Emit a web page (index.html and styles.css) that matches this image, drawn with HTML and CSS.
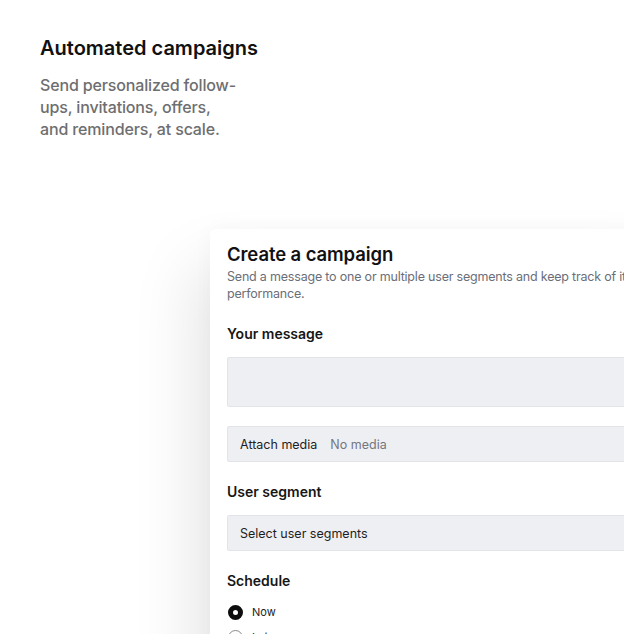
FILE: index.html
```html
<!DOCTYPE html>
<html lang="en">
<head>
<meta charset="utf-8">
<title>Automated campaigns</title>
<link rel="stylesheet" href="styles.css">
</head>
<body>
  <section class="intro">
    <h1 class="intro-title">Automated campaigns</h1>
    <p class="intro-text">Send personalized follow-ups, invitations, offers, and reminders, at scale.</p>
  </section>
  <div class="stage">
    <div class="card">
      <h2 class="card-title">Create a campaign</h2>
      <p class="card-sub">Send a message to one or multiple user segments and keep track of its performance.</p>

      <div class="label first">Your message</div>
      <div class="field textarea"></div>
      <div class="field row gap-top">
        <span class="field-key">Attach media</span>
        <span class="field-val">No media</span>
      </div>

      <div class="label">User segment</div>
      <div class="field row">
        <span class="field-key">Select user segments</span>
      </div>

      <div class="label">Schedule</div>
      <div class="radios">
        <div class="radio-row"><span class="radio on"></span><span class="radio-text">Now</span></div>
        <div class="radio-row"><span class="radio"></span><span class="radio-text">Later</span></div>
      </div>
    </div>
  </div>
</body>
</html>
```
FILE: styles.css
```css
html, body {
  margin: 0;
  padding: 0;
  background: #ffffff;
  overflow: hidden;
  height: 634px;
}
body {
  font-family: Inter, "Noto Sans", "Liberation Sans", sans-serif;
  color: #111111;
}
.intro {
  padding: 36px 0 0 40px;
}
.intro-title {
  margin: 0;
  font-size: 20px;
  line-height: 24px;
  font-weight: 600;
  letter-spacing: 0;
  color: #111111;
}
.intro-text {
  margin: 14px 0 0 0;
  width: 200px;
  font-size: 16px;
  line-height: 22px;
  color: #6e6e70;
  font-weight: 500;
  letter-spacing: -0.15px;
}
.stage {
  padding-top: 89px;
  padding-left: 210px;
}
.card {
  width: 460px;
  height: 460px;
  background: #ffffff;
  border-radius: 6px 0 0 0;
  box-shadow: -16px 36px 64px rgba(0, 0, 0, 0.10), 0 0 20px rgba(0, 0, 0, 0.03);
  padding: 13px 0 0 17px;
  box-sizing: border-box;
}
.card-title {
  margin: 0;
  font-size: 18.5px;
  line-height: 24px;
  font-weight: 600;
  color: #111111;
  letter-spacing: -0.1px;
}
.card-sub {
  margin: 2px 0 0 0;
  font-size: 12.5px;
  line-height: 17px;
  color: #6b6e78;
  width: 420px;
  letter-spacing: -0.2px;
}
.label {
  margin-top: 20px;
  font-size: 14px;
  line-height: 20px;
  font-weight: 600;
  color: #161616;
}
.label.first {
  margin-top: 22px;
}
.field {
  margin-top: 13px;
  width: 460px;
  background: #eeeff3;
  border: 1px solid #e3e4e9;
  border-radius: 2px;
  box-sizing: border-box;
}
.field.textarea {
  height: 50px;
}
.field.row {
  height: 36px;
  display: flex;
  align-items: center;
  padding-left: 12px;
  gap: 13px;
  font-size: 12.5px;
}
.field.gap-top {
  margin-top: 19px;
}
.field-key {
  color: #1e1e20;
}
.field-val {
  color: #75767c;
}
.radios {
  margin-top: 11px;
  display: flex;
  flex-direction: column;
  gap: 5px;
}
.radio-row {
  display: flex;
  align-items: center;
  gap: 9px;
  height: 20px;
}
.radio {
  width: 15px;
  height: 15px;
  border-radius: 50%;
  box-sizing: border-box;
  border: 1.5px solid #8a8a8e;
  margin-left: 1px;
  flex: none;
}
.radio.on {
  border: 5px solid #0d0d0d;
  background: #ffffff;
}
.radio-text {
  font-size: 11px;
  color: #222222;
}
```
